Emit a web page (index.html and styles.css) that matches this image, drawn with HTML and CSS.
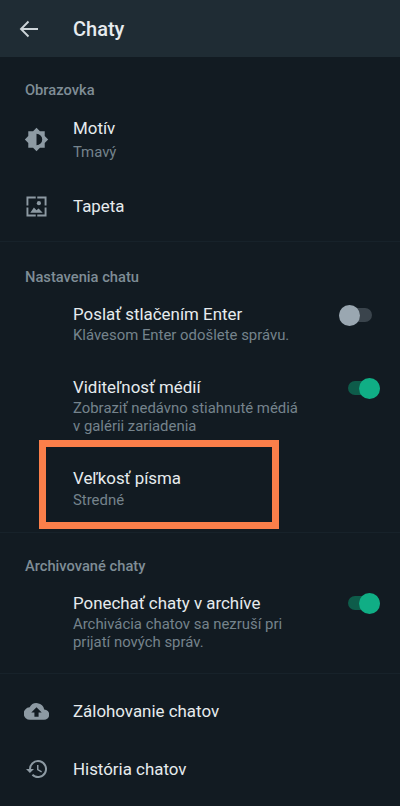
FILE: index.html
```html
<!DOCTYPE html>
<html lang="sk">
<head>
<meta charset="utf-8">
<title>Chaty</title>
<link rel="stylesheet" href="styles.css">
</head>
<body>
<div class="app">
  <header class="bar">
    <svg class="back" viewBox="0 0 20 18" width="20" height="18"><path d="M19 9H2M9.500 1.500 2 9l7.500 7.500" fill="none" stroke="#cdd5d9" stroke-width="1.900"/></svg>
    <h1>Chaty</h1>
  </header>
  <section class="sec first">
    <h2>Obrazovka</h2>
    <div class="row motiv">
      <div class="ico"><svg viewBox="0 0 24 24" width="25" height="25"><path fill="#8d9aa3" fill-rule="evenodd" d="M12 .8l3.300 3.300h4.600v4.600L23.200 12l-3.300 3.300v4.600h-4.600L12 23.200l-3.300-3.300H4.100v-4.600L.8 12l3.300-3.300V4.100h4.600L12 .8zm0 5.700v11a5.500 5.500 0 0 0 0-11z"/></svg></div>
      <div class="txt"><div class="t">Motív</div><div class="s sub-wide">Tmavý</div></div>
    </div>
    <div class="row tapeta">
      <div class="ico"><svg viewBox="0 0 22 22" width="21" height="21"><path fill="none" stroke="#8d9aa3" stroke-width="2" d="M1.500 10V1.500H10.200M11.800 1.500H20.500V10M20.500 12V20.500H11.800M10.200 20.500H1.500V12"/><circle cx="13.500" cy="7.500" r="2.200" fill="#8d9aa3"/><path fill="#8d9aa3" d="M4.500 17.500l3.800-5.500 2.700 3 2.200-2 4.300 4.500z"/></svg></div>
      <div class="txt"><div class="t">Tapeta</div></div>
    </div>
  </section>
  <section class="sec chat">
    <h2>Nastavenia chatu</h2>
    <div class="row enter">
      <div class="ico"></div>
      <div class="txt"><div class="t">Poslať stlačením Enter</div><div class="s">Klávesom Enter odošlete správu.</div></div>
      <div class="sw off"><i></i></div>
    </div>
    <div class="row media">
      <div class="ico"></div>
      <div class="txt"><div class="t">Viditeľnosť médií</div><div class="s">Zobraziť nedávno stiahnuté médiá<br>v galérii zariadenia</div></div>
      <div class="sw on"><i></i></div>
    </div>
    <div class="row font">
      <div class="ico"></div>
      <div class="txt"><div class="t">Veľkosť písma</div><div class="s">Stredné</div></div>
      <div class="mark"></div>
    </div>
  </section>
  <section class="sec">
    <h2>Archivované chaty</h2>
    <div class="row arch">
      <div class="ico"></div>
      <div class="txt"><div class="t">Ponechať chaty v archíve</div><div class="s">Archivácia chatov sa nezruší pri<br>prijatí nových správ.</div></div>
      <div class="sw on"><i></i></div>
    </div>
  </section>
  <section class="sec last">
    <div class="row single">
      <div class="ico"><svg viewBox="0 0 24 24" width="25" height="25"><path fill="#8d9aa3" fill-rule="evenodd" d="M19.400 10A7.500 7.500 0 0 0 5.400 8 6 6 0 0 0 6 20h13a5 5 0 0 0 .4-10zM14 13v4h-4v-4H7l5-5 5 5h-3z"/></svg></div>
      <div class="txt"><div class="t">Zálohovanie chatov</div></div>
    </div>
    <div class="row single">
      <div class="ico"><svg viewBox="0 0 24 24" width="24" height="24"><path fill="#8d9aa3" d="M13 3a9 9 0 0 0-9 9H1l3.900 3.900L9 12H6a7 7 0 1 1 2.100 5l-1.400 1.400A9 9 0 1 0 13 3zm-1 5v5l4.300 2.500.7-1.200-3.500-2.100V8H12z"/></svg></div>
      <div class="txt"><div class="t">História chatov</div></div>
    </div>
  </section>
</div>
</body>
</html>
```
FILE: styles.css
```css
* { box-sizing: border-box; }
html, body { margin: 0; padding: 0; }
body {
  width: 400px;
  height: 806px;
  overflow: hidden;
  background: #121b22;
  font-family: Roboto, "Liberation Sans", sans-serif;
}
.app { width: 400px; height: 806px; display: flex; flex-direction: column; }
.bar {
  height: 57px;
  background: #1f2c34;
  display: flex;
  align-items: center;
  padding-left: 19px;
  flex: none;
}
.back { flex: none; margin-right: 34px; }
.bar h1 { margin: 0; font-size: 20px; font-weight: 500; color: #e6ebee; }
.sec { border-bottom: 1px solid #17222a; padding-top: 23px; }
.sec:last-child { border-bottom: 0; }
.sec.first { height: 185px; }
.sec.chat { padding-top: 25px; height: 291px; }
.sec.last { padding-top: 8px; }
h2 {
  margin: 0 0 0 25px;
  font-size: 14.700px;
  line-height: 20px;
  font-weight: 500;
  color: #7f8d96;
}
.row { display: flex; position: relative; align-items: flex-start; }
.ico {
  width: 73px;
  flex: none;
  display: flex;
  justify-content: center;
}
.txt { flex: 1; min-width: 0; }
.t { font-size: 16.900px; line-height: 22px; color: #e6ebee; }
.s { font-size: 14.900px; line-height: 18px; color: #75838c; margin-top: 1px; }
.s.sub-wide { margin-top: 4px; }
.font .s { margin-top: 2px; }
.motiv { margin-top: 17px; height: 62px; }
.motiv .ico { padding-top: 10px; }
.tapeta { margin-top: 7px; height: 40px; align-items: center; }
.enter { margin-top: 16px; height: 72px; }
.media { margin-top: 1px; height: 91px; }
.font { height: 66px; }
.arch { margin-top: 16px; height: 81px; }
.single { height: 58px; align-items: center; }
.sw { height: 14px; border-radius: 7px; position: relative; flex: none; margin-top: 5px; }
.sw i { position: absolute; width: 21px; height: 21px; border-radius: 50%; top: -3.500px; }
.sw.off { width: 33px; background: #3a444c; margin-right: 28px; }
.sw.off i { left: 0; background: #9aa7b1; }
.sw.on { width: 32px; background: #0e5c4a; margin-right: 20px; }
.sw.on i { right: 0; background: #10ae85; }
.arch .sw { margin-top: 4px; }
.mark {
  position: absolute;
  left: 39px;
  top: -27px;
  width: 240px;
  height: 89px;
  border: 7px solid #fb7f4a;
}
```
